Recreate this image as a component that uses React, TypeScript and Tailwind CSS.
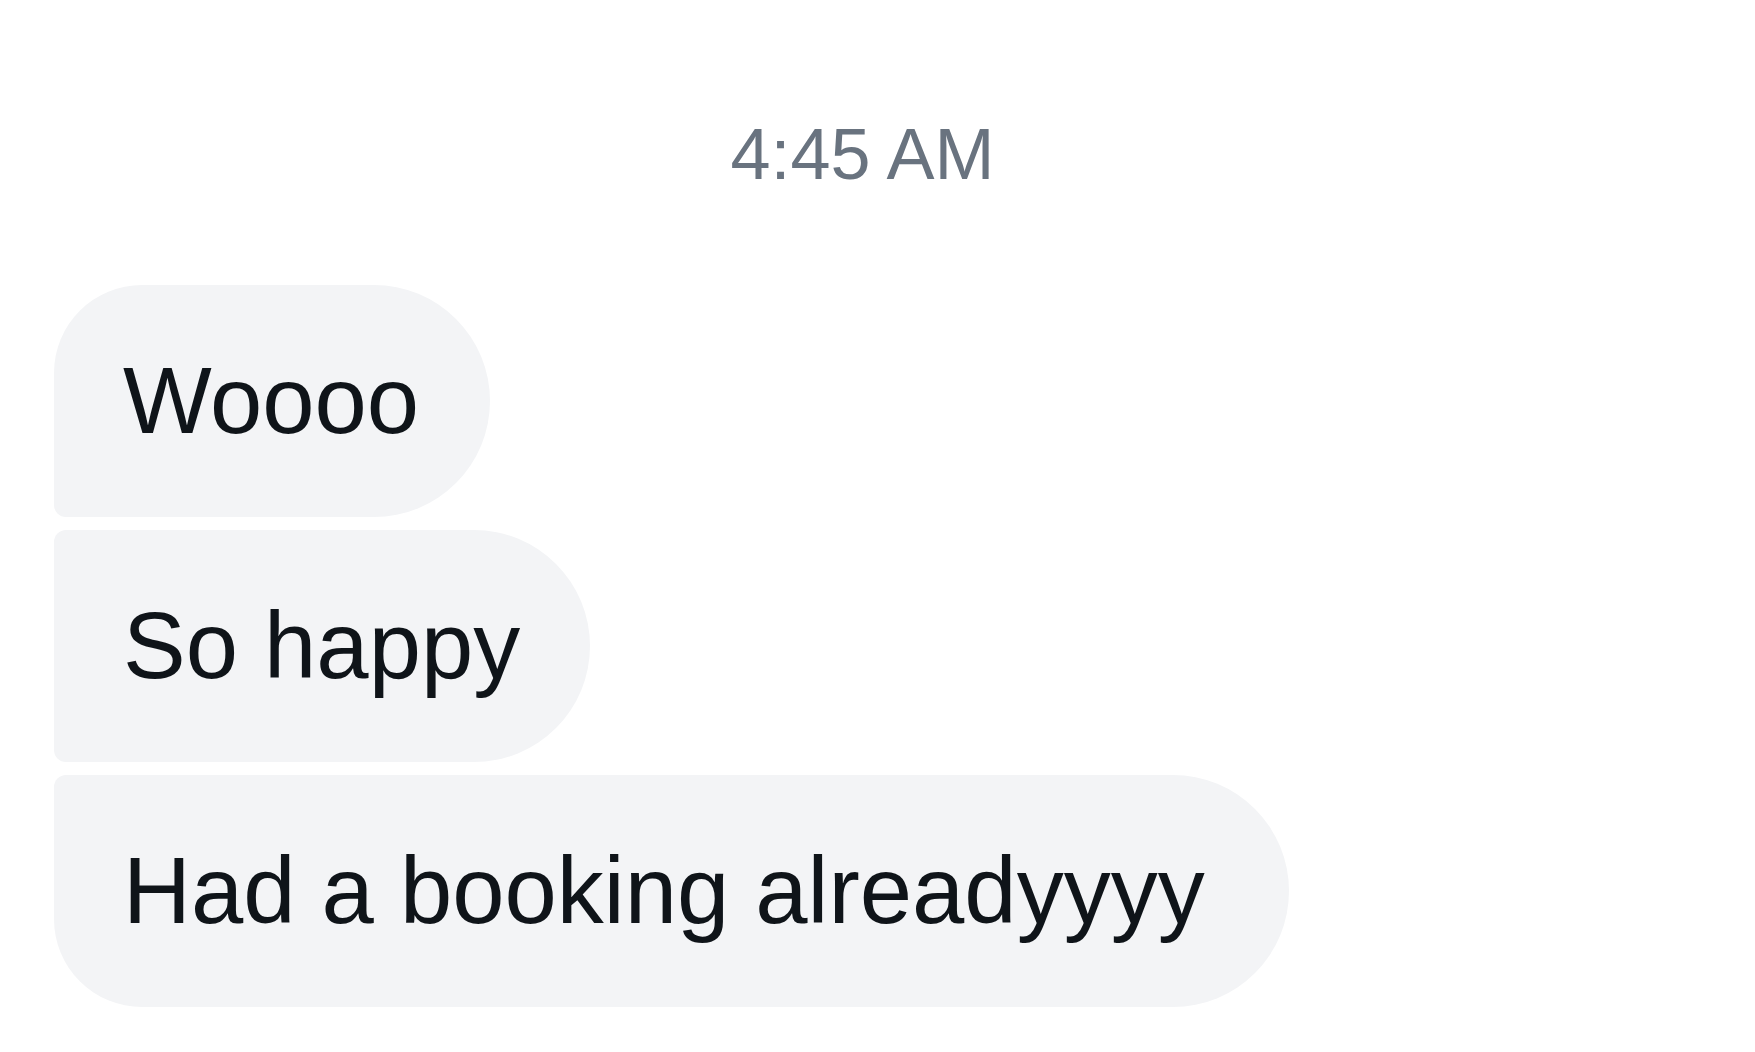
import React from "react";

type Msg = {
  id: string;
  text: string;
  shape: string;
};

const messages: Msg[] = [
  { id: "m1", text: "Woooo", shape: "w-[436px] rounded-tl-[88px] rounded-bl-[12px]" },
  { id: "m2", text: "So happy", shape: "w-[536px] rounded-tl-[12px] rounded-bl-[12px]" },
  { id: "m3", text: "Had a booking alreadyyyy", shape: "w-[1235px] rounded-tl-[12px] rounded-bl-[88px]" },
];

export default function App() {
  return (
    <div
      className="min-h-screen w-full bg-white"
      style={{ fontFamily: '"Liberation Sans", Arial, sans-serif' }}
    >
      {/* timestamp */}
      <div className="pt-[114px] pr-[30px] text-center text-[72px] leading-[80px] text-[#69737f]">
        4:45 AM
      </div>

      {/* received group */}
      <div className="mt-[91px] flex flex-col items-start gap-[13px] pl-[54px]">
        {messages.map((m) => (
          <div
            key={m.id}
            className={`flex h-[232px] items-center whitespace-nowrap rounded-r-[116px] bg-[#f3f4f6] pl-[69px] text-[94px] leading-none text-[#0f1419] ${m.shape}`}
          >
            {m.text}
          </div>
        ))}
      </div>
    </div>
  );
}
